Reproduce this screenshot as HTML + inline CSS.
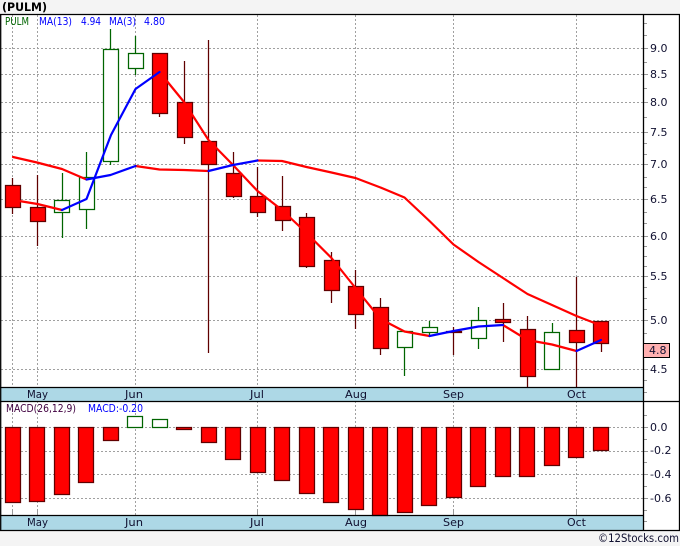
<!DOCTYPE html>
<html><head><meta charset="utf-8"><style>
html,body{margin:0;padding:0;background:#f4f4f4;width:680px;height:546px;overflow:hidden}
svg{display:block}
text{font-family:"DejaVu Sans","Liberation Sans",sans-serif;font-size:11px;fill:#101030}
.r{fill:#f00;stroke:#600000;stroke-width:1.25}
.g{fill:#fff;stroke:#006400;stroke-width:1.25}
</style></head><body>
<svg width="680" height="546" viewBox="0 0 680 546" xmlns="http://www.w3.org/2000/svg">
<rect x="0" y="14" width="680" height="516" fill="#fff"/>
<rect x="1" y="387" width="642" height="14" fill="#add8e6"/>
<rect x="1" y="515" width="642" height="15" fill="#add8e6"/>
<g stroke="#a0a0a0" stroke-width="1" stroke-dasharray="2 2" shape-rendering="crispEdges" fill="none">
<path d="M1 48.5H648M1 74.5H648M1 102.5H648M1 132.5H648M1 164.5H648M1 199.5H648M1 236.5H648M1 276.5H648M1 320.5H648M1 369.5H648"/>
<path d="M1 427.5H648M1 451.5H648M1 474.5H648M1 498.5H648"/>
<path d="M12.5 15V387M37.5 15V387M135.5 15V387M257.5 15V387M355.5 15V387M453.5 15V387M576.5 15V387"/>
<path d="M12.5 401V515M37.5 401V515M135.5 401V515M257.5 401V515M355.5 401V515M453.5 401V515M576.5 401V515"/>
</g>
<path shape-rendering="crispEdges" stroke="#999" fill="none" d="M12.5 509V515M37.5 509V515M135.5 401V406M257.5 509V515M355.5 509V515M453.5 509V515M576.5 509V515M644 23.5H647M644 35.5H647M644 48.5H648M644 62.5H647M644 74.5H648M644 88.5H647M644 102.5H648M644 117.5H647M644 132.5H648M644 143.5H647M644 154.5H647M644 164.5H648M644 177.5H647M644 187.5H647M644 199.5H648M644 212.5H647M644 223.5H647M644 236.5H648M644 246.5H647M644 256.5H647M644 266.5H647M644 276.5H648M644 287.5H647M644 298.5H647M644 309.5H647M644 320.5H648M644 333.5H647M644 369.5H648M644 380.5H647M644 392.5H647M644 415.5H647M644 427.5H648M644 439.5H647M644 451.5H648M644 462.5H647M644 474.5H648M644 486.5H647M644 498.5H648M644 510.5H647M644 521.5H647"/>
<g class="c">
<path stroke="#600000" stroke-width="1.25" fill="none" d="M12.5 178V214M37.5 175V246M159.5 113V117M184.5 61V144M208.5 40V353M233.5 152V198M257.5 167V217M282.5 176V231M306.5 213V268M331.5 252V303M355.5 270V329M380.5 298V355M453.5 327V355M503.5 303V342M527.5 316V387M576.5 277V387M601.5 343V352"/>
<path stroke="#006400" stroke-width="1.25" fill="none" d="M62.5 173V238M86.5 152V229M110.5 29V165M135.5 36V75M404.5 347V376M429.5 321V336M478.5 307V349M552.5 323V333"/>
<rect class="r" x="5.5" y="185.5" width="15" height="22"/>
<rect class="r" x="30.5" y="207.5" width="15" height="14"/>
<rect class="g" x="54.5" y="200.5" width="15" height="12"/>
<rect class="g" x="79.5" y="177.5" width="15" height="32"/>
<rect class="g" x="103.5" y="49.5" width="15" height="112"/>
<rect class="g" x="128.5" y="53.5" width="15" height="15"/>
<rect class="r" x="152.5" y="53.5" width="15" height="60"/>
<rect class="r" x="177.5" y="102.5" width="15" height="35"/>
<rect class="r" x="201.5" y="141.5" width="15" height="23"/>
<rect class="r" x="226.5" y="173.5" width="15" height="23"/>
<rect class="r" x="250.5" y="196.5" width="15" height="16"/>
<rect class="r" x="275.5" y="206.5" width="15" height="14"/>
<rect class="r" x="299.5" y="217.5" width="15" height="49"/>
<rect class="r" x="324.5" y="260.5" width="15" height="30"/>
<rect class="r" x="348.5" y="286.5" width="15" height="28"/>
<rect class="r" x="373.5" y="307.5" width="15" height="41"/>
<rect class="g" x="397.5" y="331.5" width="15" height="16"/>
<rect class="g" x="422.5" y="327.5" width="15" height="5"/>
<rect class="r" x="446.5" y="331.5" width="15" height="1"/>
<rect class="g" x="471.5" y="320.5" width="15" height="18"/>
<rect class="r" x="495.5" y="319.5" width="15" height="3"/>
<rect class="r" x="520.5" y="329.5" width="15" height="47"/>
<rect class="g" x="544.5" y="332.5" width="15" height="37"/>
<rect class="r" x="569.5" y="330.5" width="15" height="12"/>
<rect class="r" x="593.5" y="321.5" width="15" height="22"/>
</g>
<g fill="none" stroke-width="2.2" stroke-linejoin="round" stroke-linecap="round">
<path stroke="#f00" d="M13 157L37 162.500L62 169L86.500 179.500"/>
<path stroke="#f00" d="M135.500 166L159.500 169.500L184 170L208.500 171"/>
<path stroke="#f00" d="M257.500 160.500L282 161L306.500 167L331.500 172.500L355.500 178L380.500 187.500L404.500 197.500L429.500 221L453.500 244.500L478.500 262L503 278L527.500 294L552 305L576.500 316L601 325.500"/>
<path stroke="#f00" d="M13 200L37.500 204L62 210"/>
<path stroke="#f00" d="M159.500 72L184 102L208.500 140L233 165L257.500 191L282 210L306.500 233L331.500 258L355.500 288L380.500 319L404.500 331.500L429.500 336"/>
<path stroke="#f00" d="M503 325L527.500 340L552 344.500L576.500 351"/>
<path stroke="#00f" d="M86.500 179.500L110.500 175L135.500 166"/>
<path stroke="#00f" d="M208.500 171L233 165L257.500 160.500"/>
<path stroke="#00f" d="M62 210L86.500 199L111 135L135.500 89L159.500 72"/>
<path stroke="#00f" d="M429.500 336L453.500 331L478.500 326.500L503 325"/>
<path stroke="#00f" d="M576.500 351L601 340"/>
</g>
<g class="m">
<rect class="r" x="5.500" y="427.500" width="15" height="75"/>
<rect class="r" x="29.500" y="427.500" width="15" height="74"/>
<rect class="r" x="54.500" y="427.500" width="15" height="67"/>
<rect class="r" x="78.500" y="427.500" width="15" height="55"/>
<rect class="r" x="103.500" y="427.500" width="15" height="13"/>
<rect class="g" x="127.500" y="416.500" width="15" height="11"/>
<rect class="g" x="152.500" y="419.500" width="15" height="8"/>
<rect class="r" x="176.500" y="427.500" width="15" height="2"/>
<rect class="r" x="201.500" y="427.500" width="15" height="15"/>
<rect class="r" x="225.500" y="427.500" width="15" height="32"/>
<rect class="r" x="250.500" y="427.500" width="15" height="45"/>
<rect class="r" x="274.500" y="427.500" width="15" height="53"/>
<rect class="r" x="299.500" y="427.500" width="15" height="66"/>
<rect class="r" x="323.500" y="427.500" width="15" height="75"/>
<rect class="r" x="348.500" y="427.500" width="15" height="82"/>
<rect class="r" x="372.500" y="427.500" width="15" height="88"/>
<rect class="r" x="397.500" y="427.500" width="15" height="85"/>
<rect class="r" x="421.500" y="427.500" width="15" height="78"/>
<rect class="r" x="446.500" y="427.500" width="15" height="70"/>
<rect class="r" x="470.500" y="427.500" width="15" height="59"/>
<rect class="r" x="495.500" y="427.500" width="15" height="49"/>
<rect class="r" x="519.500" y="427.500" width="15" height="49"/>
<rect class="r" x="544.500" y="427.500" width="15" height="38"/>
<rect class="r" x="568.500" y="427.500" width="15" height="30"/>
<rect class="r" x="593.500" y="427.500" width="15" height="23"/>
</g>
<path stroke="#000" stroke-width="1.3" fill="none" d="M0 14.500H680M0.700 14V530M679.500 14V530M643.500 14V530M0 387.500H643M0 401.500H680M0 515.500H643M0 530.500H680"/>
<rect x="643.500" y="343.500" width="26" height="14" fill="#ffb0b0" stroke="#000" shape-rendering="crispEdges"/>
<text x="2" y="11" style="font-weight:bold;font-size:11.500px;fill:#000" textLength="45" lengthAdjust="spacingAndGlyphs">(PULM)</text>
<text x="5" y="25" style="fill:#006400;font-size:10.500px" textLength="24" lengthAdjust="spacingAndGlyphs">PULM</text>
<text x="39" y="25" style="fill:#00f;font-size:10.500px" textLength="33" lengthAdjust="spacingAndGlyphs">MA(13)</text>
<text x="81" y="25" style="fill:#00f;font-size:10.500px" textLength="20" lengthAdjust="spacingAndGlyphs">4.94</text>
<text x="109" y="25" style="fill:#00f;font-size:10.500px" textLength="27" lengthAdjust="spacingAndGlyphs">MA(3)</text>
<text x="144" y="25" style="fill:#00f;font-size:10.500px" textLength="21" lengthAdjust="spacingAndGlyphs">4.80</text>
<text x="6" y="412" style="fill:#400040;font-size:10.500px" textLength="70" lengthAdjust="spacingAndGlyphs">MACD(26,12,9)</text>
<text x="88" y="412" style="fill:#00f;font-size:10.500px" textLength="55" lengthAdjust="spacingAndGlyphs">MACD:-0.20</text>
<g>
<text x="650" y="52">9.0</text>
<text x="650" y="78">8.5</text>
<text x="650" y="106">8.0</text>
<text x="650" y="136">7.5</text>
<text x="650" y="168">7.0</text>
<text x="650" y="203">6.5</text>
<text x="650" y="240">6.0</text>
<text x="650" y="280">5.5</text>
<text x="650" y="324">5.0</text>
<text x="650" y="373">4.5</text>
<text x="649" y="354">4.8</text>
<text x="650" y="431">0.0</text>
<text x="650" y="454">-0.2</text>
<text x="650" y="478">-0.4</text>
<text x="650" y="502">-0.6</text>
</g>
<g>
<text x="27" y="398" textLength="21" lengthAdjust="spacingAndGlyphs">May</text>
<text x="125" y="398" textLength="18" lengthAdjust="spacingAndGlyphs">Jun</text>
<text x="250" y="398" textLength="14" lengthAdjust="spacingAndGlyphs">Jul</text>
<text x="345" y="398" textLength="22" lengthAdjust="spacingAndGlyphs">Aug</text>
<text x="443" y="398" textLength="21" lengthAdjust="spacingAndGlyphs">Sep</text>
<text x="567" y="398" textLength="19" lengthAdjust="spacingAndGlyphs">Oct</text>
<text x="27" y="526" textLength="21" lengthAdjust="spacingAndGlyphs">May</text>
<text x="125" y="526" textLength="18" lengthAdjust="spacingAndGlyphs">Jun</text>
<text x="250" y="526" textLength="14" lengthAdjust="spacingAndGlyphs">Jul</text>
<text x="345" y="526" textLength="22" lengthAdjust="spacingAndGlyphs">Aug</text>
<text x="443" y="526" textLength="21" lengthAdjust="spacingAndGlyphs">Sep</text>
<text x="567" y="526" textLength="19" lengthAdjust="spacingAndGlyphs">Oct</text>
</g>
<text x="598" y="542" style="font-size:11.500px" textLength="81" lengthAdjust="spacingAndGlyphs">©12Stocks.com</text>
</svg>
</body></html>
